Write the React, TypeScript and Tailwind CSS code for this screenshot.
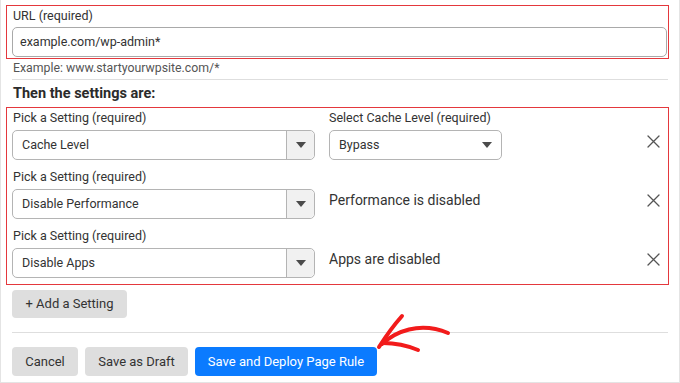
import React from "react";

const font = { fontFamily: "Roboto, 'Liberation Sans', sans-serif" };

function Caret() {
    return (
        <svg width="10" height="6" viewBox="0 0 10 6" className="shrink-0">
            <path d="M0 0 L10 0 L5 6 Z" fill="#4b4b4b" />
        </svg>
    );
}

function Close() {
    return (
        <svg width="13" height="13" viewBox="0 0 13 13" className="shrink-0">
            <path d="M1 1 L12 12 M12 1 L1 12" stroke="#555" strokeWidth="1.3" strokeLinecap="round" />
        </svg>
    );
}

function SettingSelect({ value }: { value: string }) {
    return (
        <div className="flex h-[30px] w-[303px] items-stretch rounded-[5px] border border-[#b4b4b4] bg-white">
            <div className="flex flex-1 items-center pl-[9px] text-[12.5px] text-[#333]">{value}</div>
            <div className="flex w-[28px] items-center justify-center rounded-r-[5px] border-l border-[#b4b4b4] bg-[#f1f1f1]">
                <Caret />
            </div>
        </div>
    );
}

type Row = { label: string; value: string; side: React.ReactNode };

const rows: Row[] = [
    {
        label: "Pick a Setting (required)",
        value: "Cache Level",
        side: (
            <div className="flex h-[30px] w-[173px] items-center justify-between rounded-[5px] border border-[#b4b4b4] bg-white pl-[9px] pr-[9px] text-[12.5px] text-[#333]">
                <span>Bypass</span>
                <Caret />
            </div>
        ),
    },
    {
        label: "Pick a Setting (required)",
        value: "Disable Performance",
        side: <span className="pb-[8px] text-[14px] text-[#333]">Performance is disabled</span>,
    },
    {
        label: "Pick a Setting (required)",
        value: "Disable Apps",
        side: <span className="pb-[8px] text-[14px] text-[#333]">Apps are disabled</span>,
    },
];

export default function App() {
    return (
        <div
            style={font}
            className="relative h-[383px] w-[680px] overflow-hidden border-x border-b border-[#e4e4e4] bg-white pl-[5px] pr-[10px] pt-[5px]"
        >
            {/* URL block */}
            <div className="border border-[#e4383d] pb-px pl-[5px] pr-px">
                <div className="h-[20px] pl-px text-[12.5px] leading-[20px] text-[#333]">URL (required)</div>
                <div className="mt-px flex h-[30px] items-center rounded-[5px] border border-[#a9a9a9] pl-[7px] text-[12.5px] text-[#333]">
                    example.com/wp-admin*
                </div>
            </div>

            <div className="pl-[6px] pr-[1px]">
                <div className="mt-px pl-px text-[12.3px] leading-[16px] text-[#555]">Example: www.startyourwpsite.com/*</div>
                <div className="mt-[3px] border-t border-[#dedede]" />
                <div className="mt-[6px] pl-px text-[14.5px] font-bold leading-[16px] text-[#2b2b2b]">
                    Then the settings are:
                </div>
            </div>

            {/* Settings block */}
            <div className="mt-[5px] flex flex-col gap-[8px] border border-[#e4383d] px-[5px] pb-[6px] pt-px">
                {rows.map((r, i) => (
                    <div key={i} className="flex flex-col">
                        <div className="flex h-[18px] text-[12.5px] leading-[18px] text-[#333]">
                            <span className="w-[317px] pl-px">{r.label}</span>
                            {i === 0 && <span>Select Cache Level (required)</span>}
                        </div>
                        <div className="mt-[3px] flex h-[30px] items-center">
                            <SettingSelect value={r.value} />
                            <div className="ml-[14px] flex flex-1 items-center">{r.side}</div>
                            <div className="mr-[3px] pb-[8px]">
                                <Close />
                            </div>
                        </div>
                    </div>
                ))}
            </div>

            <div className="pl-[6px] pr-[1px]">
                <button className="mt-[5px] h-[28px] w-[115px] rounded-[4px] bg-[#dedede] text-[13px] text-[#333]">
                    + Add a Setting
                </button>
                <div className="mt-[14px] border-t border-[#dedede]" />
                <div className="mt-[14px] flex gap-[7px]">
                    <button className="h-[29px] w-[66px] rounded-[4px] bg-[#dedede] text-[13px] text-[#333]">Cancel</button>
                    <button className="h-[29px] w-[103px] rounded-[4px] bg-[#dedede] text-[13px] text-[#333]">
                        Save as Draft
                    </button>
                    <button className="h-[29px] w-[182px] rounded-[4px] bg-[#0b7bff] text-[13px] text-white">
                        Save and Deploy Page Rule
                    </button>
                </div>
            </div>

            {/* hand-drawn annotation arrow */}
            <svg className="pointer-events-none absolute left-0 top-0" width="680" height="383" viewBox="0 0 680 383">
                <g stroke="#f21b1b" strokeWidth="4" strokeLinecap="round" fill="none">
                    <path d="M381 344 C 394 332, 418 321, 447 333" />
                    <path d="M378 347 C 385 336, 393 325, 401 316" />
                    <path d="M382 343 C 393 343, 405 345, 417 350" />
                </g>
            </svg>
        </div>
    );
}
